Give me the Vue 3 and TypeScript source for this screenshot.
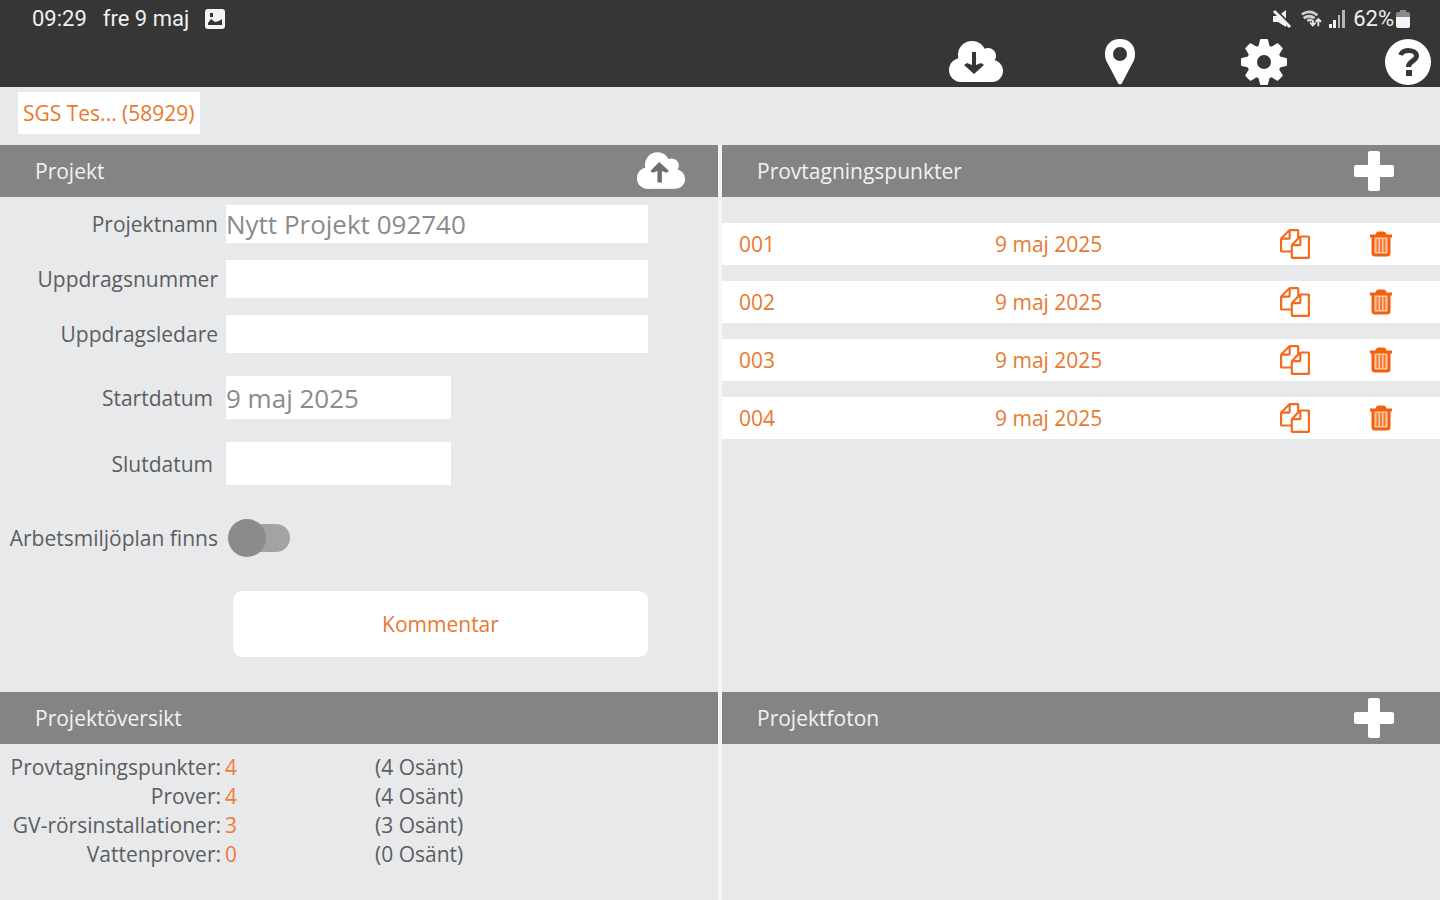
<script setup lang="ts">
import { ref } from 'vue'

interface SamplePoint {
  id: string
  date: string
}
interface Summary {
  label: string
  total: number
}

const points: SamplePoint[] = ['001', '002', '003', '004'].map((id) => ({ id, date: '9 maj 2025' }))
const summary: Summary[] = [
  { label: 'Provtagningspunkter:', total: 4 },
  { label: 'Prover:', total: 4 },
  { label: 'GV-rörsinstallationer:', total: 3 },
  { label: 'Vattenprover:', total: 0 },
]
const teeth = [0, 45, 90, 135, 180, 225, 270, 315]
const projectName = ref('Nytt Projekt 092740')
const assignmentNumber = ref('')
const assignmentLead = ref('')
const startDate = ref('9 maj 2025')
const endDate = ref('')
const hasPlan = ref(false)
</script>

<template>
  <div class="app">
    <header class="top">
      <div class="status">
        <span>09:29</span>
        <span class="day">fre 9 maj</span>
        <svg class="s-pic" viewBox="0 0 20 20" aria-hidden="true">
          <path fill="#f4f4f4" fill-rule="evenodd" d="M3 0h14a3 3 0 0 1 3 3v14a3 3 0 0 1-3 3H3a3 3 0 0 1-3-3V3a3 3 0 0 1 3-3zM3 16h14v-6l-3 2-4 1-4-3-3 4zM5 4v4h3V4z" />
        </svg>
        <span class="spacer"></span>
        <svg class="s-mute" viewBox="0 0 20 20" aria-hidden="true">
          <path fill="#f4f4f4" d="M1 7h5l8-6v17l-8-5H1z" />
          <path d="M3 0l17 17" stroke="#363636" stroke-width="2" />
          <path d="M2 2l16 16" stroke="#f4f4f4" stroke-width="3" />
        </svg>
        <svg class="s-wifi" viewBox="0 0 24 20" aria-hidden="true">
          <path d="M2 5q9-6 17 1M4 9q6-4 12 0M8 12q3-2 5 0" fill="none" stroke="#cfcfcf" stroke-width="3" />
          <path d="M14 11v6M11 14l3 3 3-3M20 18v-7M17 13l3-3 3 3" fill="none" stroke="#e4e4e4" stroke-width="2" />
        </svg>
        <svg class="s-signal" viewBox="0 0 18 20" aria-hidden="true">
          <path d="M1 15h3v4H1zM5 11h3v8H5z" fill="#f0f0f0" />
          <path d="M10 6h2v13h-2zM14 1h3v18h-3z" fill="#b5b5b5" />
        </svg>
        <span class="battery-text">62%</span>
        <svg class="s-battery" viewBox="0 0 14 20" aria-hidden="true">
          <path d="M4 1h6v2h2a2 2 0 0 1 2 2v3H0V5a2 2 0 0 1 2-2h2z" fill="#8a8a8a" />
          <path d="M0 8h14v9a2 2 0 0 1-2 2H2a2 2 0 0 1-2-2z" fill="#f4f4f4" />
        </svg>
      </div>
      <nav class="tools">
        <button type="button" class="tool" aria-label="Ladda ner">
          <svg class="i-cloud" viewBox="0 0 56 42" aria-hidden="true">
            <g fill="#fff">
              <circle cx="24" cy="14" r="14" />
              <circle cx="40" cy="15" r="8" />
              <circle cx="13" cy="29" r="12" />
              <circle cx="44" cy="30" r="11" />
              <path d="M13 13h30v28H13z" />
            </g>
            <path fill="#363636" d="M24 11h4v13l5-2 3 2-10 9-10-9 3-2 5 2z" />
          </svg>
        </button>
        <button type="button" class="tool" aria-label="Karta">
          <svg class="i-pin" viewBox="0 0 30 46" aria-hidden="true">
            <path fill="#fff" fill-rule="evenodd" d="M15 0c9 0 15 6 15 15 0 4-1 7-3 10L17 44q-2 3-4 0L3 25C1 22 0 19 0 15 0 6 6 0 15 0zm0 8a7 7 0 1 0 0 14 7 7 0 0 0 0-14z" />
          </svg>
        </button>
        <button type="button" class="tool" aria-label="Inställningar">
          <svg class="i-gear" viewBox="0 0 46 46" aria-hidden="true">
            <g fill="#fff">
              <circle cx="23" cy="23" r="17" />
              <path v-for="a in teeth" :key="a" d="M17 9l2-8q0-1 1-1h6q1 0 1 1l2 8z" :transform="`rotate(${a} 23 23)`" />
            </g>
            <circle cx="23" cy="23" r="7" fill="#363636" />
          </svg>
        </button>
        <button type="button" class="tool" aria-label="Hjälp">
          <svg class="i-help" viewBox="0 0 46 46" aria-hidden="true">
            <circle cx="23" cy="23" r="23" fill="#fff" />
            <path d="M15.500 16c2-6 16-6 16 1 0 5-8 5-8 11" fill="none" stroke="#363636" stroke-width="5" />
            <path d="M21 31h6v6h-6z" fill="#363636" />
          </svg>
        </button>
      </nav>
    </header>

    <div class="tabs">
      <button type="button" class="tab">SGS Tes... (58929)</button>
    </div>

    <main class="panels">
      <section class="panel">
        <div class="bar">
          <h2>Projekt</h2>
          <button type="button" class="bar-btn" aria-label="Ladda upp">
            <svg class="i-upload" viewBox="0 0 56 42" aria-hidden="true">
              <g fill="#fff">
                <circle cx="24" cy="14" r="14" />
                <circle cx="40" cy="15" r="8" />
                <circle cx="13" cy="29" r="12" />
                <circle cx="44" cy="30" r="11" />
                <path d="M13 13h30v28H13z" />
              </g>
              <path fill="#6e6e6e" d="M24 34h5V21l5 2 3-2-11-10-10 10 3 2 5-2z" />
            </svg>
          </button>
        </div>
        <form class="form" @submit.prevent>
          <div class="field">
            <label for="name">Projektnamn</label>
            <input id="name" v-model="projectName" type="text" />
          </div>
          <div class="field">
            <label for="number">Uppdragsnummer</label>
            <input id="number" v-model="assignmentNumber" type="text" />
          </div>
          <div class="field">
            <label for="lead">Uppdragsledare</label>
            <input id="lead" v-model="assignmentLead" type="text" />
          </div>
          <div class="field date">
            <label for="start">Startdatum</label>
            <input id="start" v-model="startDate" type="text" />
          </div>
          <div class="field date">
            <label for="end">Slutdatum</label>
            <input id="end" v-model="endDate" type="text" />
          </div>
          <div class="field plan">
            <label for="plan">Arbetsmiljöplan finns</label>
            <input id="plan" v-model="hasPlan" class="switch" type="checkbox" role="switch" />
          </div>
          <button type="button" class="comment">Kommentar</button>
        </form>
      </section>

      <section class="panel">
        <div class="bar">
          <h2>Provtagningspunkter</h2>
          <button type="button" class="bar-btn" aria-label="Ny provtagningspunkt">
            <svg class="i-plus" viewBox="0 0 40 40" aria-hidden="true">
              <path fill="#fff" d="M16 0h8q2 0 2 2v12h12q2 0 2 2v8q0 2-2 2H26v12q0 2-2 2h-8q-2 0-2-2V26H2q-2 0-2-2v-8q0-2 2-2h12V2q0-2 2-2z" />
            </svg>
          </button>
        </div>
        <ul class="points">
          <li v-for="p in points" :key="p.id" class="point">
            <span class="pid">{{ p.id }}</span>
            <span class="pdate">{{ p.date }}</span>
            <button type="button" class="act" :aria-label="'Kopiera ' + p.id">
              <svg class="i-copy" viewBox="0 0 1792 1792" aria-hidden="true">
                <path fill="#f26a1b" d="M1696 384q40 0 68 28t28 68v1216q0 40-28 68t-68 28h-960q-40 0-68-28t-28-68v-288h-544q-40 0-68-28t-28-68v-672q0-40 20-88t48-76l408-408q28-28 76-48t88-20h416q40 0 68 28t28 68v328q68-40 128-40h416zm-544 213l-299 299h299v-299zm-640-384l-299 299h299v-299zm196 647l316-316v-416h-384v416q0 40-28 68t-68 28h-416v640h512v-256q0-40 20-88t48-76zm956 804v-1152h-384v416q0 40-28 68t-68 28h-416v640h896z" />
              </svg>
            </button>
            <button type="button" class="act" :aria-label="'Ta bort ' + p.id">
              <svg class="i-trash" viewBox="0 0 24 26" aria-hidden="true">
                <path fill="#fbc9a8" d="M4 6h16v17H4z" />
                <path fill="none" stroke="#f4600c" stroke-width="3" stroke-linejoin="round" d="M1 5h22M8 4q0-2 2-2h4q2 0 2 2M4 5v17q0 2 2 2h12q2 0 2-2V5" />
                <path stroke="#f4782f" stroke-width="2" d="M8.500 8v13M12 8v13M15.500 8v13" />
              </svg>
            </button>
          </li>
        </ul>
      </section>

      <section class="panel">
        <div class="bar">
          <h2>Projektöversikt</h2>
        </div>
        <table class="summary">
          <tbody>
            <tr v-for="s in summary" :key="s.label">
              <th scope="row">{{ s.label }}</th>
              <td class="total">{{ s.total }}</td>
              <td>({{ s.total }} Osänt)</td>
            </tr>
          </tbody>
        </table>
      </section>

      <section class="panel">
        <div class="bar">
          <h2>Projektfoton</h2>
          <button type="button" class="bar-btn" aria-label="Nytt foto">
            <svg class="i-plus" viewBox="0 0 40 40" aria-hidden="true">
              <path fill="#fff" d="M16 0h8q2 0 2 2v12h12q2 0 2 2v8q0 2-2 2H26v12q0 2-2 2h-8q-2 0-2-2V26H2q-2 0-2-2v-8q0-2 2-2h12V2q0-2 2-2z" />
            </svg>
          </button>
        </div>
      </section>
    </main>
  </div>
</template>

<style>
body {
  margin: 0;
  background: #e8e9eb;
}
</style>

<style scoped>
.app {
  display: flex;
  flex-direction: column;
  min-height: 100vh;
  font-family: 'Open Sans', 'Noto Sans', sans-serif;
  font-size: 21px;
  line-height: 28px;
  color: #5c5d60;
  background: #e8e9eb;
}
button,
input {
  font: inherit;
  border: 0;
  margin: 0;
  padding: 0;
  border-radius: 0;
  box-sizing: border-box;
}
button {
  background: none;
  cursor: pointer;
}
svg {
  display: block;
  flex: none;
}
.top {
  background: #363636;
  padding-bottom: 1px;
}
.status {
  display: flex;
  align-items: center;
  height: 38px;
  padding: 0 30px 0 32px;
  font-family: Roboto, sans-serif;
  font-size: 22px;
  color: #f0f0f0;
}
.day { margin: 0 16px; }
.spacer { flex: 1; }
.s-pic { width: 20px; height: 20px; }
.s-mute { width: 20px; height: 20px; margin-right: 8px; }
.s-wifi { width: 22px; height: 20px; margin-right: 6px; }
.s-signal { width: 18px; height: 20px; margin-right: 7px; }
.s-battery { width: 14px; height: 20px; margin-left: 2px; }
.tools {
  display: flex;
  justify-content: flex-end;
}
.tool {
  display: flex;
  justify-content: center;
  align-items: center;
  width: 64px;
  height: 48px;
  margin-left: 80px;
}
.i-cloud { width: 56px; height: 42px; }
.i-pin { width: 30px; height: 46px; }
.i-gear, .i-help { width: 46px; height: 46px; }

.tabs {
  display: flex;
  padding: 5px 18px 11px;
}
.tab {
  height: 42px;
  padding: 0 5px;
  background: #fff;
  color: #e8792f;
}
.panels {
  flex: 1;
  display: grid;
  grid-template-columns: 1fr 1fr;
  grid-template-rows: auto 1fr;
  column-gap: 4px;
  background: #f6f6f7;
}
.panel { background: #e8e9eb; }
.bar {
  display: flex;
  justify-content: space-between;
  align-items: center;
  height: 52px;
  padding: 0 46px 0 35px;
  background: #848484;
}
.bar h2 {
  margin: 0;
  font-size: 21px;
  font-weight: 400;
  color: #f2f2f2;
}
.i-plus { width: 40px; height: 40px; }
.i-upload { width: 50px; height: 38px; }
.bar:has(.i-upload) { padding-right: 32px; }

.form {
  display: flex;
  flex-direction: column;
  gap: 17px;
  padding: 8px 70px 35px 0;
}
.field {
  display: flex;
  align-items: center;
}
.field label {
  width: 218px;
  margin-right: 8px;
  text-align: right;
  white-space: nowrap;
}
.field input[type='text'] {
  flex: 1;
  min-width: 0;
  height: 38px;
  background: #fff;
  font-size: 26px;
  color: #8b8b8b;
}
.date { margin-top: 6px; }
.date label {
  width: 213px;
  margin-right: 13px;
}
.field.date input[type='text'] {
  flex: none;
  width: 225px;
  height: 43px;
}
.plan { margin-top: 22px; }
.switch {
  appearance: none;
  display: flex;
  align-items: center;
  width: 62px;
  height: 28px;
  margin-left: 2px;
  border-radius: 14px;
  background: linear-gradient(90deg, transparent 18px, #a3a3a3 18px);
}
.switch::before {
  content: '';
  width: 38px;
  height: 38px;
  flex: none;
  border-radius: 50%;
  background: #8b8b8b;
}
.switch:checked { justify-content: flex-end; background: #f4b183; }
.switch:checked::before { background: #f26a1b; }
.comment {
  height: 66px;
  margin: 22px 0 0 233px;
  border-radius: 9px;
  background: #fff;
  color: #e8792f;
}
.points {
  list-style: none;
  margin: 0;
  padding: 26px 0;
  display: flex;
  flex-direction: column;
  gap: 16px;
}
.point {
  display: grid;
  grid-template-columns: 256fr 290fr 54px 118px;
  align-items: center;
  height: 42px;
  background: #fff;
  color: #e8792f;
}
.pid { padding-left: 17px; }
.pdate { padding-left: 17px; }
.act {
  display: flex;
  justify-content: center;
}
.i-copy { width: 30px; height: 30px; }
.i-trash { width: 24px; height: 26px; }

.summary {
  border-collapse: collapse;
  margin-top: 8px;
}
.summary th,
.summary td {
  height: 29px;
  padding: 0;
  font-weight: 400;
  text-align: left;
}
.summary th {
  width: 221px;
  text-align: right;
}
.summary .total {
  width: 150px;
  padding-left: 4px;
  color: #f37a35;
}
</style>
